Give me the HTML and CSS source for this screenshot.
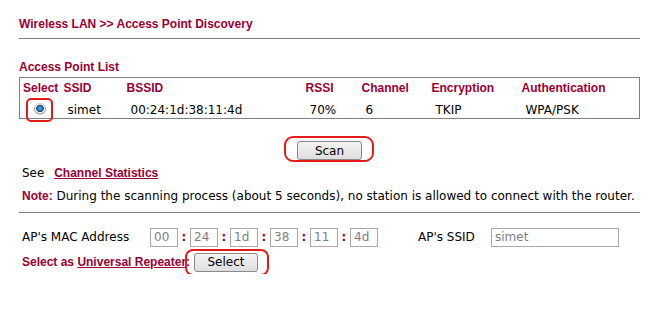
FILE: index.html
```html
<!DOCTYPE html>
<html lang="en">
<head>
  <meta charset="UTF-8" />
  <title>Access Point Discovery</title>
  <link rel="stylesheet" href="styles.css">
</head>
<body>
  <div class="page">
    <div class="title">Wireless LAN &gt;&gt; Access Point Discovery</div>
    <div class="rule"></div>

    <div class="section-title">Access Point List</div>
    <table class="ap-list">
      <colgroup>
        <col style="width:41px"><col style="width:63px"><col style="width:179px"><col style="width:56px">
        <col style="width:70px"><col style="width:90px"><col>
      </colgroup>
      <thead>
        <tr>
          <th>Select</th><th>SSID</th><th>BSSID</th><th>RSSI</th><th>Channel</th><th>Encryption</th><th>Authentication</th>
        </tr>
      </thead>
      <tbody>
        <tr>
          <td class="radio-cell"><span class="radio-wrap"><span class="radio"></span><span class="mark mark-radio"></span></span></td>
          <td>simet</td><td>00:24:1d:38:11:4d</td><td>70%</td><td>6</td><td>TKIP</td><td>WPA/PSK</td>
        </tr>
      </tbody>
    </table>

    <div class="scan-row">
      <span class="btn-wrap"><button class="btn scan">Scan</button><span class="mark mark-scan"></span></span>
    </div>

    <div class="see">See <a href="#">Channel Statistics</a></div>
    <div class="note"><b>Note:</b> During the scanning process (about 5 seconds), no station is allowed to connect with the router.</div>
    <div class="rule rule-lower"></div>

    <div class="mac-row">
      <span class="label mac-label">AP's MAC Address</span>
      <input class="oct" value="00"><span class="colon">:</span>
      <input class="oct" value="24"><span class="colon">:</span>
      <input class="oct" value="1d"><span class="colon">:</span>
      <input class="oct" value="38"><span class="colon">:</span>
      <input class="oct" value="11"><span class="colon">:</span>
      <input class="oct" value="4d">
      <span class="label ssid-label">AP's SSID</span>
      <input class="ssid" value="simet">
    </div>

    <div class="repeater-row">
      <span class="rep-label">Select as <a href="#">Universal Repeater</a>:</span>
      <span class="btn-wrap"><button class="btn select">Select</button><span class="mark mark-select"></span></span>
    </div>
  </div>
</body>
</html>
```

FILE: styles.css
```css
body {
  margin: 0;
  background: #fff;
  font-family: "DejaVu Sans", Verdana, sans-serif;
  font-size: 12px;
  color: #000;
}

.page {
  width: 621px;
  padding: 16px 0 0 19px;
}

.title, .section-title, .ap-list th, .note b, .rep-label, .see a {
  font-family: "Liberation Sans", Arial, sans-serif;
  font-weight: bold;
  color: #990033;
}

.title {
  font-size: 12px;
  line-height: 16px;
}

.rule {
  border-top: 1px solid #808080;
  margin-top: 6px;
}

.section-title {
  font-size: 12px;
  line-height: 14px;
  margin-top: 21px;
}

.ap-list {
  width: 621px;
  margin-top: 3px;
  border: 1px solid #808080;
  border-collapse: collapse;
  table-layout: fixed;
}

.ap-list th {
  text-align: left;
  font-size: 12px;
  padding: 0 0 0 3px;
  height: 20px;
  vertical-align: middle;
  white-space: nowrap;
}

.ap-list td {
  padding: 3px 0 0 7px;
  height: 17px;
  vertical-align: middle;
  white-space: nowrap;
}

.ap-list td.radio-cell {
  padding-left: 14px;
}

.radio-wrap {
  position: relative;
  display: inline-block;
  width: 12px;
  height: 12px;
  vertical-align: -1px;
}

.radio {
  display: block;
  width: 12px;
  height: 12px;
  border-radius: 50%;
  background: radial-gradient(circle at 50% 45%, #5fb4f0 0, #1f6fb8 2.5px, #0e3f78 3.5px, #e6e6e6 4px, #f4f4f4 4.6px, #9a9a9a 5.5px, #c8c8c8 6px);
}

.mark {
  position: absolute;
  border: 2.5px solid #e41b1b;
  border-radius: 5px;
  pointer-events: none;
}

.mark-radio {
  left: -8px;
  top: -5px;
  width: 23px;
  height: 20px;
}

.scan-row {
  text-align: center;
  margin-top: 22px;
  height: 20px;
}

.btn-wrap {
  position: relative;
  display: inline-block;
}

.btn {
  font-family: "DejaVu Sans", Verdana, sans-serif;
  font-size: 12px;
  height: 19px;
  padding: 0;
  border: 1px solid #8a8a8a;
  border-radius: 3px;
  background: linear-gradient(#f4f4f4, #dedede);
  color: #000;
  line-height: 16px;
  vertical-align: top;
}

.scan { width: 65px; }

.select { width: 64px; }

.mark-scan {
  left: -13px;
  top: -5px;
  width: 86px;
  height: 22px;
  border-radius: 9px;
}

.see {
  margin-top: 4px;
  line-height: 16px;
  padding-left: 3px;
}

.see a {
  margin-left: 6px;
  text-decoration: underline;
}

.note {
  margin-top: 7px;
  line-height: 16px;
  padding-left: 3px;
  white-space: nowrap;
}

.note b { font-size: 12px; }

.rule-lower {
  margin-top: 8px;
}

.mac-row {
  display: flex;
  align-items: center;
  margin-top: 14px;
  padding-left: 3px;
  height: 20px;
}

.label {
  font-size: 12px;
}

.mac-label { width: 128px; }

.oct {
  width: 28px;
  height: 19px;
  box-sizing: border-box;
  border: 1px solid #a9a9a9;
  padding: 0 0 0 3px;
  font-family: "DejaVu Sans", Verdana, sans-serif;
  font-size: 12px;
  color: #808080;
}

.colon {
  width: 12px;
  text-align: center;
  color: #990033;
  font-weight: bold;
}

.ssid-label {
  margin-left: 40px;
  width: 73px;
}

.ssid {
  width: 128px;
  height: 19px;
  box-sizing: border-box;
  border: 1px solid #a9a9a9;
  padding: 0 0 0 3px;
  font-family: "DejaVu Sans", Verdana, sans-serif;
  font-size: 12px;
  color: #808080;
}

.repeater-row {
  display: flex;
  align-items: center;
  margin-top: 3px;
  padding-left: 3px;
  height: 24px;
}

.rep-label {
  font-size: 12px;
  width: 172px;
}

.rep-label a {
  color: #990033;
  text-decoration: underline;
}

.mark-select {
  left: -9px;
  top: -4px;
  width: 80px;
  height: 23px;
  border-radius: 8px;
}
```
